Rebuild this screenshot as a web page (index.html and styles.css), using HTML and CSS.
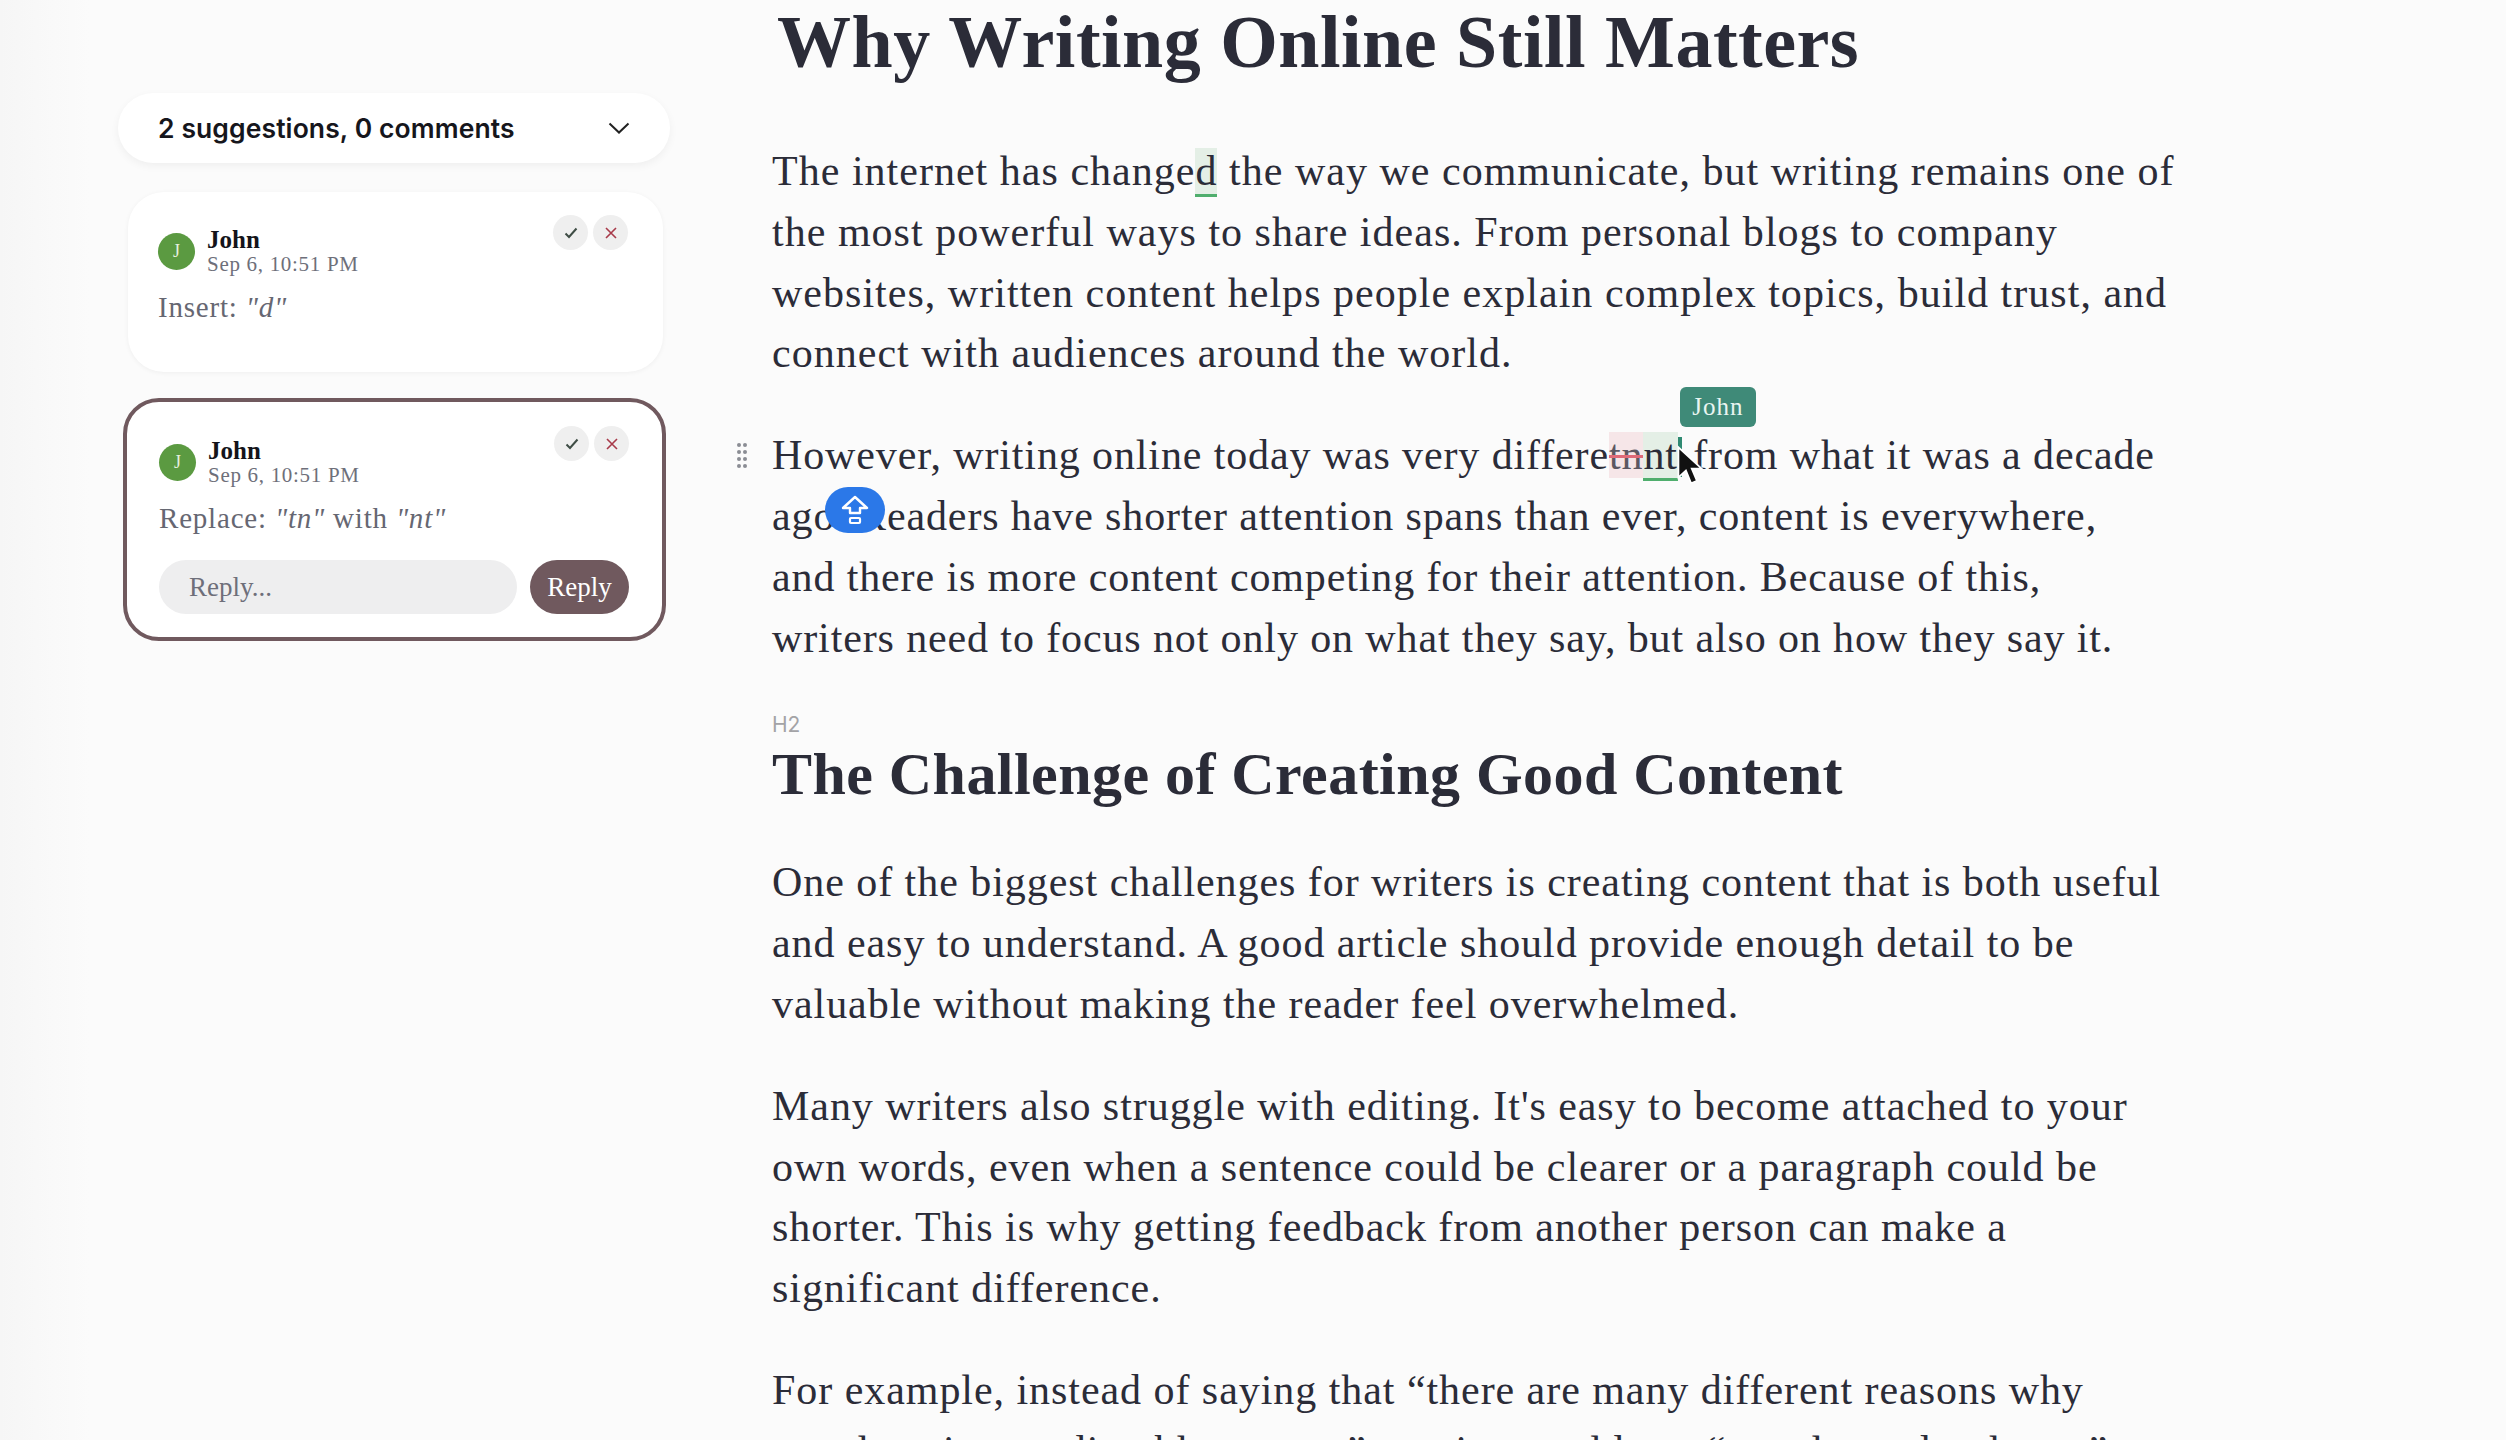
FILE: index.html
```html
<!DOCTYPE html>
<html lang="en">
<head>
    <meta charset="UTF-8">
    <meta name="viewport" content="width=device-width, initial-scale=1.0">
    <title>Why Writing Online Still Matters</title>
    <link rel="stylesheet" href="styles.css">
</head>
<body>
    <aside class="sidebar">
        <div class="summary">
            <span>2 suggestions, 0 comments</span>
            <svg class="summary-chevron" width="22" height="12" viewBox="0 0 22 12"><path d="M1.5 1.5 11 10.5l9.5-9" fill="none" stroke="#222" stroke-width="2"/></svg>
        </div>

        <div class="card">
            <div class="card-head">
                <div class="avatar">J</div>
                <div class="card-meta">
                    <strong>John</strong>
                    <span>Sep 6, 10:51 PM</span>
                </div>
                <div class="card-actions">
                    <button class="round-btn"><svg width="14" height="12" viewBox="0 0 14 12"><path d="M1.5 6.5 5 10l7.5-8.5" fill="none" stroke="#3f4d45" stroke-width="2"/></svg></button>
                    <button class="round-btn"><svg width="12" height="12" viewBox="0 0 12 12"><path d="M1 1l10 10M11 1 1 11" fill="none" stroke="#a83a4a" stroke-width="1.6"/></svg></button>
                </div>
            </div>
            <p class="card-text">Insert: <em>"d"</em></p>
        </div>

        <div class="card active">
            <div class="card-head">
                <div class="avatar">J</div>
                <div class="card-meta">
                    <strong>John</strong>
                    <span>Sep 6, 10:51 PM</span>
                </div>
                <div class="card-actions">
                    <button class="round-btn"><svg width="14" height="12" viewBox="0 0 14 12"><path d="M1.5 6.5 5 10l7.5-8.5" fill="none" stroke="#3f4d45" stroke-width="2"/></svg></button>
                    <button class="round-btn"><svg width="12" height="12" viewBox="0 0 12 12"><path d="M1 1l10 10M11 1 1 11" fill="none" stroke="#a83a4a" stroke-width="1.6"/></svg></button>
                </div>
            </div>
            <p class="card-text">Replace: <em>"tn"</em> with <em>"nt"</em></p>
            <div class="reply-row">
                <div class="reply-input">Reply...</div>
                <button class="reply-btn">Reply</button>
            </div>
        </div>
    </aside>

    <main class="doc">
        <h1>Why Writing Online Still Matters</h1>

        <p class="intro">The internet has change<span class="ins">d</span> the way we communicate, but writing remains one of<br>
        the most powerful ways to share ideas. From personal blogs to company<br>
        websites, written content helps people explain complex topics, build trust, and<br>
        connect with audiences around the world.</p>

        <p class="current">
            <svg class="drag-handle" width="12" height="28" viewBox="0 0 12 28"><g fill="#8b8d94"><circle cx="3" cy="3" r="2"/><circle cx="9" cy="3" r="2"/><circle cx="3" cy="10" r="2"/><circle cx="9" cy="10" r="2"/><circle cx="3" cy="17" r="2"/><circle cx="9" cy="17" r="2"/><circle cx="3" cy="24" r="2"/><circle cx="9" cy="24" r="2"/></g></svg>
            However, writing online today was very differe<span class="del">tn</span><span class="ins">nt</span><span class="caret"><span class="caret-tag">John</span><svg class="pointer" width="28" height="44" viewBox="0 0 24 38"><path d="M2 2v26l6.5-6 4.5 11 5-2-4.5-10.5H22z" fill="#111" stroke="#fff" stroke-width="1.5"/></svg></span> from what it was a decade<br>
            ago. Readers have shorter attention spans than ever, content is everywhere,<br>
            and there is more content competing for their attention. Because of this,<br>
            writers need to focus not only on what they say, but also on how they say it.
            <span class="shift-pill"><svg width="28" height="30" viewBox="0 0 28 30"><path d="M14 2 26 13h-7v5H9v-5H2z" fill="none" stroke="#fff" stroke-width="2.4" stroke-linejoin="round"/><rect x="9" y="23" width="10" height="5" rx="1" fill="none" stroke="#fff" stroke-width="2.2"/></svg></span>
        </p>

        <div class="block-label">H2</div>
        <h2>The Challenge of Creating Good Content</h2>

        <p>One of the biggest challenges for writers is creating content that is both useful<br>
        and easy to understand. A good article should provide enough detail to be<br>
        valuable without making the reader feel overwhelmed.</p>

        <p>Many writers also struggle with editing. It's easy to become attached to your<br>
        own words, even when a sentence could be clearer or a paragraph could be<br>
        shorter. This is why getting feedback from another person can make a<br>
        significant difference.</p>

        <p>For example, instead of saying that “there are many different reasons why<br>
        people enjoy reading blog posts,” a writer could say “people read to learn.”</p>
    </main>
</body>
</html>
```

FILE: styles.css
```css
* {
    margin: 0;
    padding: 0;
    box-sizing: border-box;
}

html,
body {
    height: 1440px;
    overflow: hidden;
}

body {
    display: flex;
    font-family: "Liberation Serif", serif;
    color: #2b2c38;
    background: linear-gradient(90deg, #f6f6f6 0, #fbfbfb 90px);
}

/* comments column */
.sidebar {
    width: 772px;
    flex-shrink: 0;
    padding: 93px 0 0 118px;
}

.summary {
    width: 552px;
    height: 70px;
    padding: 0 40px;
    margin-bottom: 29px;
    display: flex;
    align-items: center;
    justify-content: space-between;
    background: #fff;
    border-radius: 35px;
    box-shadow: 0 3px 8px rgba(0, 0, 0, 0.05);
    font-family: "Inter", sans-serif;
    font-size: 26.5px;
    font-weight: 600;
    letter-spacing: 0.1px;
    color: #16161c;
}

.card {
    width: 535px;
    height: 180px;
    margin: 0 0 26px 10px;
    padding: 36px 35px 0 30px;
    background: #fff;
    border-radius: 36px;
    box-shadow: 0 1px 5px rgba(0, 0, 0, 0.05);
}

.card.active {
    width: 543px;
    height: 243px;
    margin-left: 5px;
    padding: 37px 33px 0 32px;
    border: 4px solid #70595e;
    box-shadow: none;
}

.card-head {
    display: flex;
    align-items: flex-start;
}

.avatar {
    width: 37px;
    height: 37px;
    margin: 5px 12px 0 0;
    border-radius: 50%;
    background: #5b9a41;
    color: #e6f0df;
    font-size: 18px;
    display: flex;
    align-items: center;
    justify-content: center;
}

.card-meta {
    display: flex;
    flex-direction: column;
    line-height: 24px;
}

.card-meta strong {
    font-size: 25px;
    color: #14141a;
}

.card-meta span {
    font-size: 21px;
    color: #6e6f7a;
    letter-spacing: 0.7px;
}

.card-actions {
    margin-left: auto;
    margin-top: -13px;
    display: flex;
    gap: 5px;
}

.round-btn {
    width: 35px;
    height: 35px;
    border: none;
    border-radius: 50%;
    background: #efefef;
    display: flex;
    align-items: center;
    justify-content: center;
}

.card-text {
    margin-top: 15px;
    font-size: 29px;
    color: #666772;
    letter-spacing: 0.8px;
}

.reply-row {
    margin-top: 25px;
    display: flex;
    align-items: center;
    gap: 13px;
}

.reply-input {
    width: 362px;
    height: 54px;
    padding-left: 30px;
    border-radius: 27px;
    background: #eeeeef;
    font-size: 27px;
    line-height: 54px;
    color: #6e6f7a;
}

.reply-btn {
    width: 100px;
    height: 54px;
    border: none;
    border-radius: 27px;
    background: #70595e;
    color: #fff;
    font-family: "Liberation Serif", serif;
    font-size: 27px;
}

/* document column */
.doc {
    flex: 1;
    white-space: nowrap;
}

.doc h1 {
    margin: 2px 0 59px 5px;
    font-size: 74px;
    line-height: 80px;
    letter-spacing: 0.5px;
}

.doc h2 {
    margin-bottom: 46px;
    font-size: 60px;
    line-height: 64px;
    letter-spacing: 0.45px;
}

.doc p {
    margin-bottom: 41px;
    font-size: 42px;
    line-height: 60.8px;
    letter-spacing: 0.95px;
    position: relative;
}

.doc p.intro {
    letter-spacing: 1.02px;
}

.doc p.current {
    letter-spacing: 0.88px;
}

.block-label {
    margin: 45px 0 5px;
    font-family: "Inter", sans-serif;
    font-size: 21px;
    line-height: 24px;
    color: #a3a3a6;
}

.ins {
    background: #e4efe6;
    border-bottom: 3px solid #4fae6d;
}

.del {
    background: #f6e6e8;
    color: #5c5862;
    text-decoration: line-through;
    text-decoration-color: #df6a78;
    text-decoration-thickness: 3px;
}

.caret {
    display: inline-block;
    position: relative;
    width: 4px;
    height: 40px;
    margin-bottom: -8px;
    background: #2f8a72;
}

/* overlays on the current paragraph */
.caret-tag {
    position: absolute;
    left: 2px;
    top: -50px;
    width: 76px;
    height: 40px;
    border-radius: 6px;
    background: #3f8a78;
    color: #e9f5f1;
    font-size: 25px;
    line-height: 40px;
    letter-spacing: 1px;
    text-align: center;
}

.pointer {
    position: absolute;
    left: -2px;
    top: 8px;
}

.drag-handle {
    position: absolute;
    left: -36px;
    top: 17px;
}

.shift-pill {
    position: absolute;
    left: 53px;
    top: 62px;
    width: 60px;
    height: 46px;
    border-radius: 23px;
    background: #2b78e8;
    display: flex;
    align-items: center;
    justify-content: center;
}
```
